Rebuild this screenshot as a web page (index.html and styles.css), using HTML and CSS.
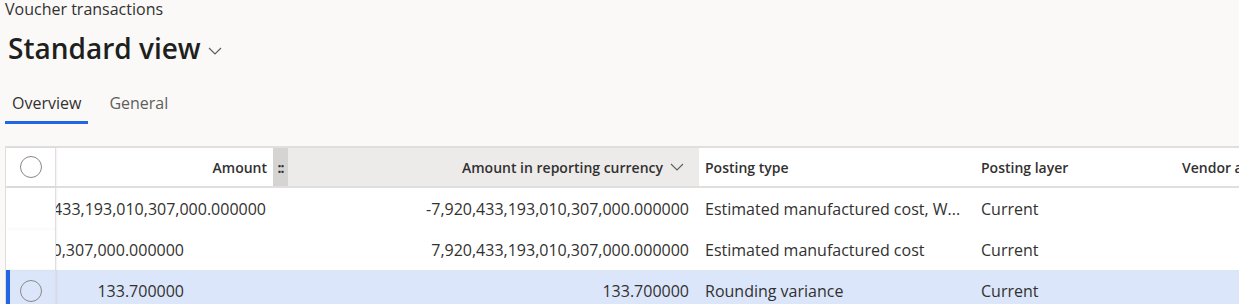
FILE: index.html
```html
<!DOCTYPE html>
<html lang="en">
<head>
    <meta charset="UTF-8">
    <title>Voucher transactions</title>
    <link rel="stylesheet" href="styles.css">
</head>
<body>

<div class="page">
    <div class="caption">Voucher transactions</div>
    <h1 class="view-title">
        Standard view
        <svg class="view-chevron" width="14" height="8" viewBox="0 0 14 8"><path d="M1 1l6 6 6-6" fill="none" stroke="#605e5c" stroke-width="1.2"/></svg>
    </h1>

    <div class="tabs">
        <span class="tab active">Overview</span>
        <span class="tab">General</span>
    </div>

    <div class="grid">
        <div class="row head">
            <div class="cell check"><span class="radio"></span></div>
            <div class="cell amount">
                <span class="label">Amount</span>
                <span class="handle">::</span>
            </div>
            <div class="cell reporting sorted">
                <span class="label">Amount in reporting currency</span>
                <svg width="14" height="8" viewBox="0 0 14 8"><path d="M1 1l6 6 6-6" fill="none" stroke="#605e5c" stroke-width="1.1"/></svg>
            </div>
            <div class="cell">Posting type</div>
            <div class="cell">Posting layer</div>
            <div class="cell">Vendor account</div>
        </div>

        <div class="row">
            <div class="cell check"></div>
            <div class="cell amount wide"><span>-7,920,433,193,010,307,000.000000</span></div>
            <div class="cell num">-7,920,433,193,010,307,000.000000</div>
            <div class="cell">Estimated manufactured cost, W...</div>
            <div class="cell">Current</div>
            <div class="cell"></div>
        </div>

        <div class="row">
            <div class="cell check"></div>
            <div class="cell amount"><span>7,920,433,193,010,307,000.000000</span></div>
            <div class="cell num">7,920,433,193,010,307,000.000000</div>
            <div class="cell">Estimated manufactured cost</div>
            <div class="cell">Current</div>
            <div class="cell"></div>
        </div>

        <div class="row selected">
            <div class="cell check"><span class="radio"></span></div>
            <div class="cell amount"><span>133.700000</span></div>
            <div class="cell num">133.700000</div>
            <div class="cell">Rounding variance</div>
            <div class="cell">Current</div>
            <div class="cell"></div>
        </div>
    </div>
</div>

</body>
</html>
```

FILE: styles.css
```css
body {
    margin: 0;
    background-color: #faf9f8;
    font-family: "Open Sans", "Noto Sans", sans-serif;
    color: #323130;
    overflow: hidden;
}

.page {
    padding-left: 5px;
}

.caption {
    font-size: 16px;
    line-height: 18px;
}

.view-title {
    margin: 12px 0 0 3px;
    font-size: 28px;
    font-weight: 600;
    line-height: 36px;
    color: #201f1e;
    display: flex;
    align-items: center;
}

.view-chevron {
    margin: 6px 0 0 7px;
}

.tabs {
    display: flex;
    margin-top: 19px;
}

.tab {
    padding: 8px 7px 8px;
    margin-right: 14px;
    font-size: 16px;
    line-height: 20px;
    color: #605e5c;
    border-bottom: 3px solid transparent;
}

.tab.active {
    color: #323130;
    border-bottom-color: #2266e3;
}

.grid {
    margin-top: 22px;
    width: 1400px;
    background-color: #fff;
    border-top: 2px solid #e1dfdd;
    border-left: 1px solid #e1dfdd;
}

.row {
    display: grid;
    grid-template-columns: 50px 232px 411px 276px 201px 230px;
    height: 41px;
    font-size: 16px;
}

.row.head {
    height: 38px;
    border-bottom: 2px solid #e1dfdd;
    font-weight: 600;
    font-size: 14px;
}

.row.selected {
    background-color: #dbe6fa;
}

.cell {
    display: flex;
    align-items: center;
    padding: 0 6px;
    white-space: nowrap;
    overflow: hidden;
}

.cell.check {
    justify-content: center;
    padding: 0;
    position: relative;
    z-index: 1;
    border-right: 1px solid #e1dfdd;
    box-shadow: 1px 0 2px rgba(0, 0, 0, 0.06);
}

.row.selected .cell.check::before {
    content: "";
    position: absolute;
    left: 0;
    top: 0;
    bottom: 0;
    width: 4px;
    background-color: #2266e3;
}

.radio {
    width: 22px;
    height: 22px;
    border: 1.5px solid #8a8886;
    border-radius: 50%;
    box-sizing: border-box;
}

.cell.amount {
    justify-content: flex-end;
    padding: 0 104px 0 0;
}

.cell.amount.wide {
    padding-right: 22px;
}

.row.head .cell.amount {
    padding: 0;
}

.handle {
    display: flex;
    align-items: center;
    justify-content: center;
    align-self: stretch;
    width: 15px;
    margin-left: 6px;
    background-color: #d6d4d2;
    font-weight: 700;
    letter-spacing: -1px;
}

.cell.reporting.sorted {
    background-color: #edebe9;
    justify-content: flex-end;
    padding-right: 15px;
}

.cell.reporting svg {
    margin-left: 7px;
}

.cell.num {
    justify-content: flex-end;
    padding-right: 10px;
}
```
